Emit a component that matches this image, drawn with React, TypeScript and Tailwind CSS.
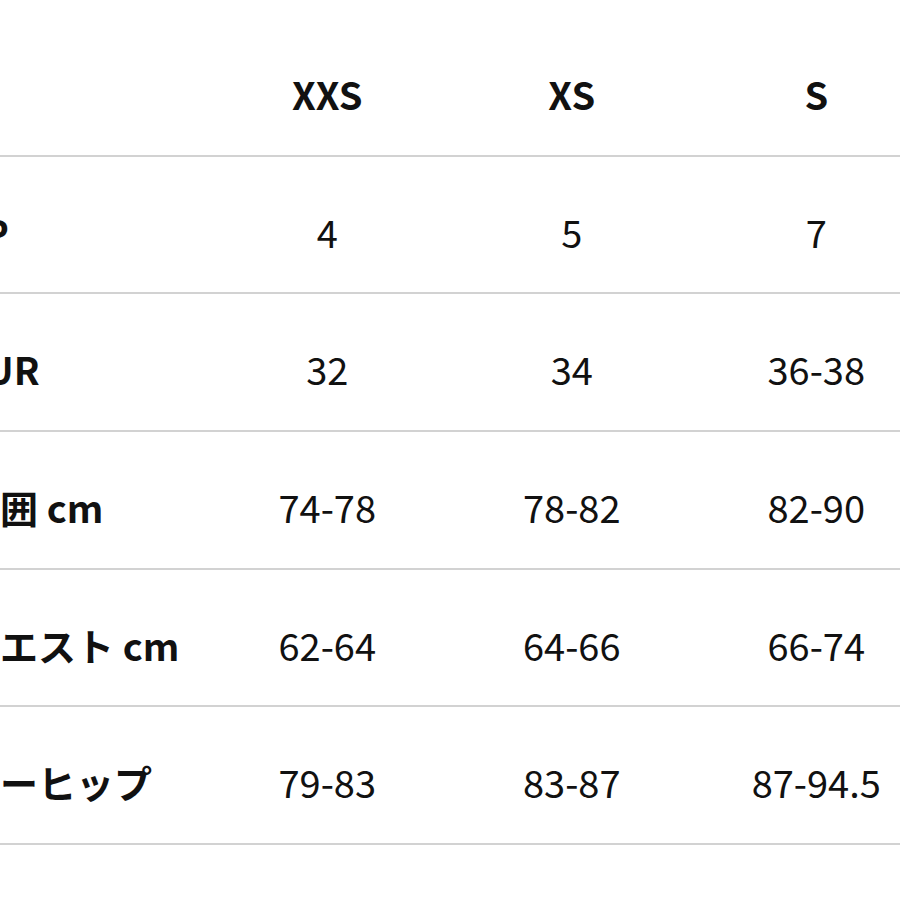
import React from "react";

const rows: { label: string; values: string[] }[] = [
  { label: "JP", values: ["4", "5", "7"] },
  { label: "EUR", values: ["32", "34", "36-38"] },
  { label: "胸囲 cm", values: ["74-78", "78-82", "82-90"] },
  { label: "ウエスト cm", values: ["62-64", "64-66", "66-74"] },
  { label: "ローヒップ", values: ["79-83", "83-87", "87-94.5"] },
];

const font = { fontFamily: '"Noto Sans CJK JP", "Noto Sans", sans-serif' };

export default function App() {
  return (
    <div className="w-[900px] h-[900px] bg-white overflow-hidden text-[#111111]" style={font}>
      <div className="ml-[-38px] w-[976.5px]">
        <div className="grid grid-cols-[243px_244.5px_244.5px_244.5px] h-[154.7px] pt-[74.5px] text-[38px] leading-[38px] font-bold">
          <div></div>
          <div className="text-center">XXS</div>
          <div className="text-center">XS</div>
          <div className="text-center">S</div>
        </div>
        {rows.map((r) => (
          <div
            key={r.label}
            className="grid grid-cols-[243px_244.5px_244.5px_244.5px] border-t-2 border-[#d2d2d2] h-[137.7px] pt-[56px] text-[38px] leading-[38px]"
          >
            <div className="font-bold whitespace-nowrap">{r.label}</div>
            {r.values.map((v, i) => (
              <div key={i} className="text-center font-normal whitespace-nowrap">
                {v}
              </div>
            ))}
          </div>
        ))}
        <div className="border-t-2 border-[#d2d2d2]"></div>
      </div>
    </div>
  );
}
